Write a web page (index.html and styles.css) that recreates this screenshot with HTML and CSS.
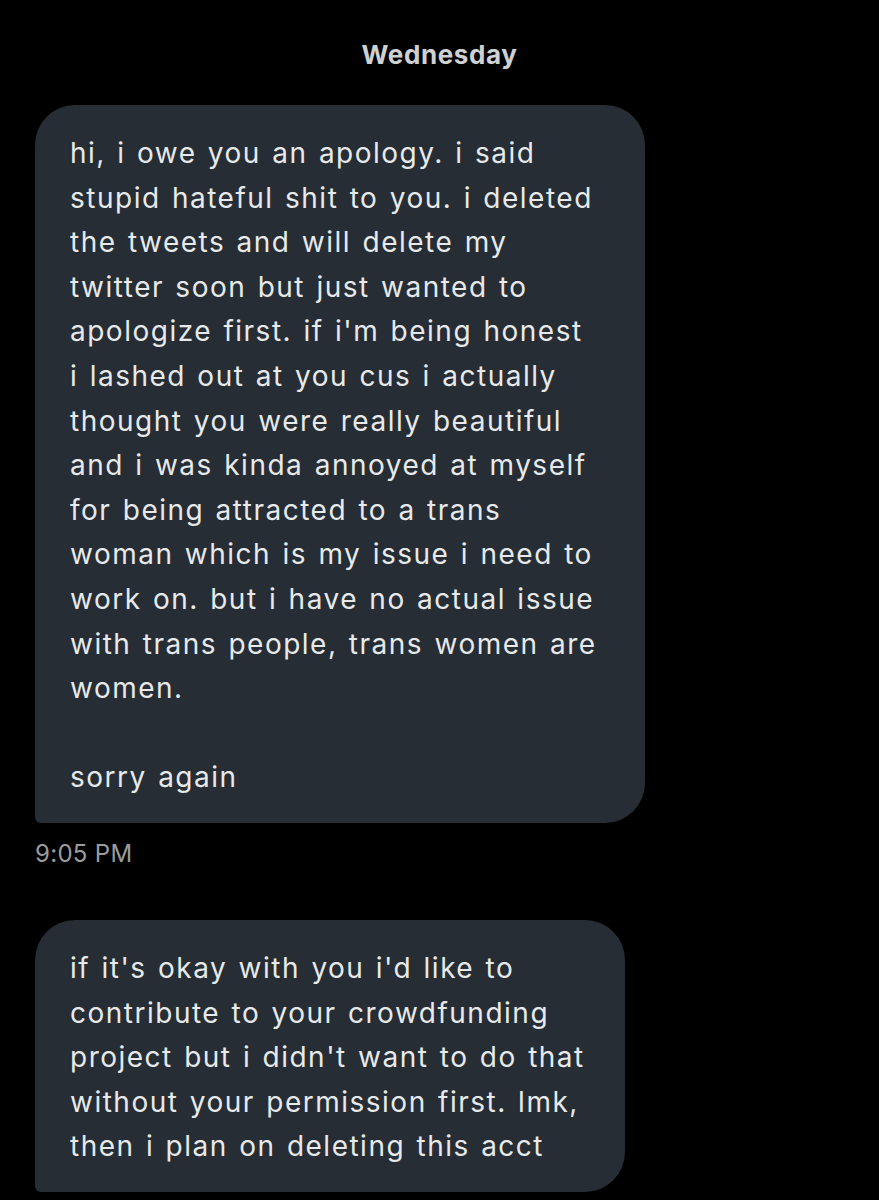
FILE: index.html
```html
<!DOCTYPE html>
<html lang="en">
<head>
<meta charset="utf-8">
<title>Messages</title>
<link rel="stylesheet" href="styles.css">
</head>
<body>
<main class="chat">
  <div class="day">Wednesday</div>
  <section class="msg">
    <div class="bubble bubble-wide">hi, i owe you an apology. i said<br>stupid hateful shit to you. i deleted<br>the tweets and will delete my<br>twitter soon but just wanted to<br>apologize first. if i'm being honest<br>i lashed out at you cus i actually<br>thought you were really beautiful<br>and i was kinda annoyed at myself<br>for being attracted to a trans<br>woman which is my issue i need to<br>work on. but i have no actual issue<br>with trans people, trans women are<br>women.<br><br>sorry again</div>
    <div class="time">9:05 PM</div>
  </section>
  <section class="msg msg-next">
    <div class="bubble bubble-narrow">if it's okay with you i'd like to<br>contribute to your crowdfunding<br>project but i didn't want to do that<br>without your permission first. lmk,<br>then i plan on deleting this acct</div>
  </section>
</main>
</body>
</html>
```

FILE: styles.css
```css
html, body {
  margin: 0;
  padding: 0;
  background: #000;
}

body {
  width: 879px;
  height: 1200px;
  overflow: hidden;
  font-family: Inter, Roboto, "Liberation Sans", sans-serif;
}

.chat {
  display: flex;
  flex-direction: column;
  align-items: flex-start;
  padding: 40px 0 0 35px;
}

.day {
  align-self: stretch;
  margin-left: -35px;
  text-align: center;
  color: #cfd0d1;
  font-weight: 700;
  font-size: 26px;
  line-height: 30px;
  letter-spacing: 0.6px;
}

.msg {
  display: flex;
  flex-direction: column;
  align-items: flex-start;
  margin-top: 35px;
}

.msg-next {
  margin-top: 52px;
}

.bubble {
  box-sizing: border-box;
  background: #262d34;
  color: #e7e9ea;
  font-size: 28px;
  line-height: 44.6px;
  padding: 26px 20px 23px 35px;
  border-radius: 40px 40px 40px 6px;
  white-space: nowrap;
  letter-spacing: 1.5px;
  word-spacing: 2px;
}

.bubble-wide {
  width: 610px;
}

.bubble-narrow {
  width: 590px;
}

.time {
  margin-top: 17px;
  color: #9c9c9c;
  font-size: 24px;
  line-height: 28px;
  letter-spacing: 0.3px;
}
```
